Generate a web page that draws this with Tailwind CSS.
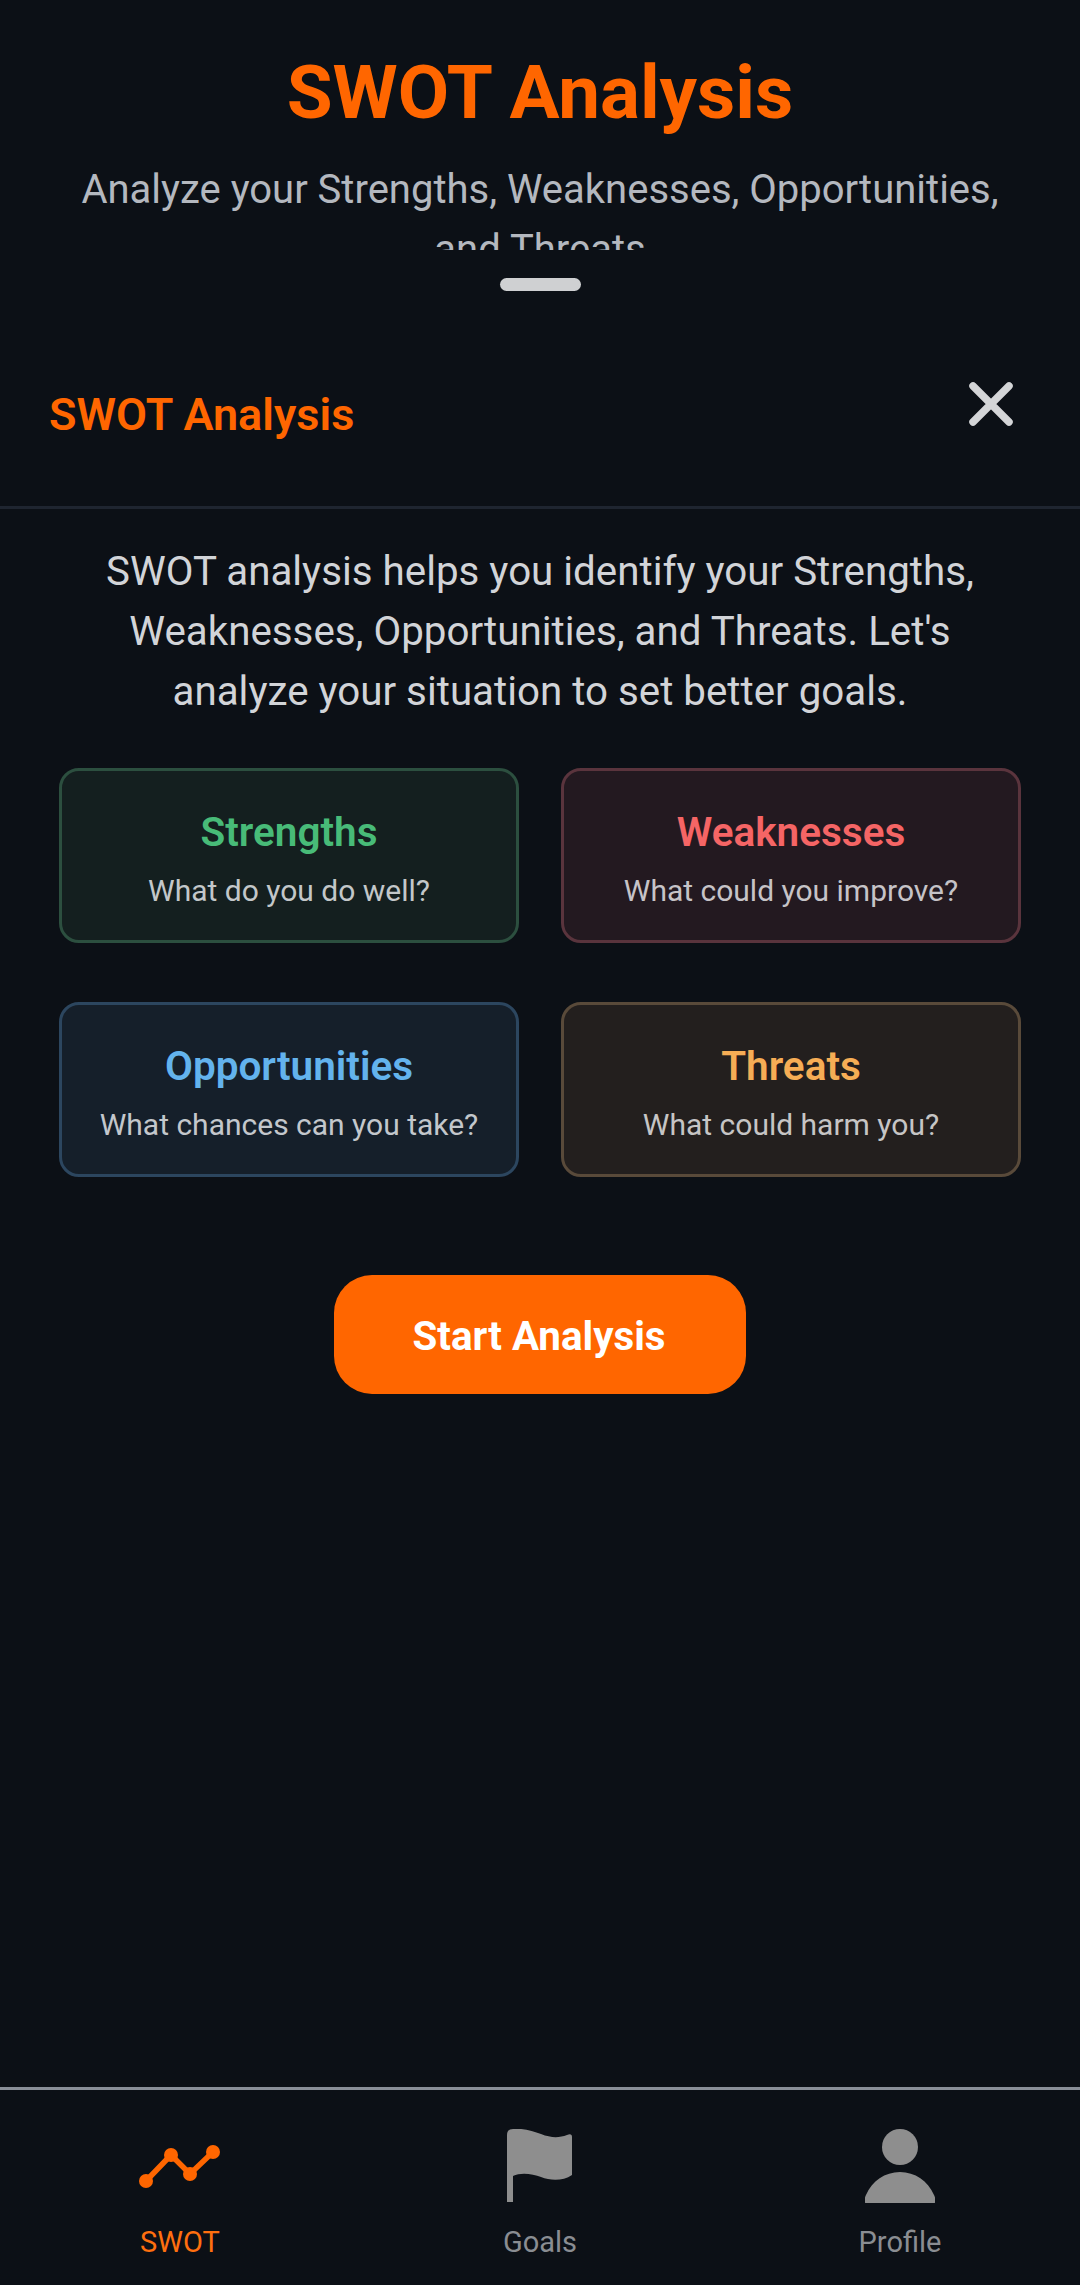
<!DOCTYPE html>
<html lang="en">
<head>
    <meta charset="UTF-8">
    <meta name="viewport" content="width=device-width, initial-scale=1.0">
    <title>SWOT Analysis</title>
    <script src="https://cdn.jsdelivr.net/npm/@tailwindcss/browser@4"></script>
</head>
<body class="bg-[#0c1016] font-[Roboto,sans-serif]">
    <div class="w-[1080px] h-[2285px] flex flex-col overflow-hidden">
        <!-- Page header, cut off by the sheet -->
        <div class="h-[250px] overflow-hidden px-[60px] pt-[48px] text-center shrink-0">
            <h1 class="text-[74.5px] leading-[90px] font-bold text-[#ff6600]">SWOT Analysis</h1>
            <p class="mt-[22px] text-[40px] leading-[60px] text-[#b4b8bf]">Analyze your Strengths, Weaknesses, Opportunities, and Threats</p>
        </div>

        <!-- Sheet -->
        <div class="flex-1 flex flex-col">
            <div class="mt-[28px] mx-auto w-[81px] h-[13px] rounded-full bg-[#cfd0d2]"></div>

            <div class="h-[218px] pl-[49px] pr-[67px] pt-[85px] flex justify-between items-start border-b-[3px] border-[#1f2530]">
                <h2 class="mt-[13px] text-[45px] leading-[52px] font-semibold text-[#ff6600]">SWOT Analysis</h2>
                <svg class="mt-[6px]" width="44" height="44" viewBox="0 0 44 44" fill="none" stroke="#d4d5d7" stroke-width="7.5" stroke-linecap="round">
                    <path d="M4 4L40 40M40 4L4 40"/>
                </svg>
            </div>

            <p class="mt-[33px] px-[80px] text-center text-[40.3px] leading-[60px] text-[#d2d4d8]">SWOT analysis helps you identify your Strengths, Weaknesses, Opportunities, and Threats. Let's analyze your situation to set better goals.</p>

            <div class="mt-[46px] mx-[59px] grid grid-cols-2 gap-x-[42px] gap-y-[59px]">
                <div class="h-[175px] pt-[6px] rounded-[20px] border-[3px] border-[#2c4f3f] bg-[#141f1f] flex flex-col items-center justify-center">
                    <h3 class="text-[40.5px] leading-[50px] font-semibold text-[#48bb78]">Strengths</h3>
                    <p class="mt-[14px] text-[30px] leading-[40px] text-[#c3c7c9]">What do you do well?</p>
                </div>
                <div class="h-[175px] pt-[6px] rounded-[20px] border-[3px] border-[#5a343d] bg-[#231920] flex flex-col items-center justify-center">
                    <h3 class="text-[40.5px] leading-[50px] font-semibold text-[#f56565]">Weaknesses</h3>
                    <p class="mt-[14px] text-[30px] leading-[40px] text-[#c6c3c7]">What could you improve?</p>
                </div>
                <div class="h-[175px] pt-[6px] rounded-[20px] border-[3px] border-[#2c465f] bg-[#151f2a] flex flex-col items-center justify-center">
                    <h3 class="text-[40.5px] leading-[50px] font-semibold text-[#63b3ed]">Opportunities</h3>
                    <p class="mt-[14px] text-[30px] leading-[40px] text-[#c3c7cc]">What chances can you take?</p>
                </div>
                <div class="h-[175px] pt-[6px] rounded-[20px] border-[3px] border-[#594a3a] bg-[#231f1e] flex flex-col items-center justify-center">
                    <h3 class="text-[40.5px] leading-[50px] font-semibold text-[#f6ad55]">Threats</h3>
                    <p class="mt-[14px] text-[30px] leading-[40px] text-[#c6c5c5]">What could harm you?</p>
                </div>
            </div>

            <button class="mt-[98px] mx-auto w-[412px] h-[119px] pt-[5px] pr-[2px] rounded-[38px] bg-[#ff6600] text-white text-[40.3px] font-bold">Start Analysis</button>
        </div>

        <!-- Bottom tabs -->
        <nav class="h-[198px] shrink-0 border-t-[3px] border-[#8a8f98] grid grid-cols-3 text-[29px] leading-[36px]">
            <div class="flex flex-col items-center">
                <svg class="mt-[39px]" width="84" height="74" viewBox="0 0 84 74" fill="none" stroke="#ff6600" stroke-width="5.5">
                    <path d="M8 52L33 26L52 45L75 23"/>
                    <g fill="#ff6600" stroke="none">
                        <circle cx="8" cy="52" r="7"/>
                        <circle cx="33" cy="26" r="7"/>
                        <circle cx="52" cy="45" r="7"/>
                        <circle cx="75" cy="23" r="7"/>
                    </g>
                </svg>
                <span class="mt-[21px] text-[#ff6f0f]">SWOT</span>
            </div>
            <div class="flex flex-col items-center">
                <svg class="mt-[39px]" width="66" height="74" viewBox="0 0 66 74" fill="#8e8e8e">
                    <path d="M0 73V6Q0 0 6 0C16 -1 26 2 34 5C44 9 52 9 60 6Q65 4 65 8V46C56 52 44 52 34 48C26 45 14 43 6 47V73Z"/>
                </svg>
                <span class="mt-[21px] text-[#8a8d92]">Goals</span>
            </div>
            <div class="flex flex-col items-center">
                <svg class="mt-[39px]" width="70" height="74" viewBox="0 0 70 74" fill="#8e8e8e">
                    <circle cx="35" cy="18" r="18"/>
                    <path d="M1 74C-2 74 0 68 1 66C7 52 20 43 35 43C50 43 63 52 69 66C70 68 72 74 69 74Z"/>
                </svg>
                <span class="mt-[21px] text-[#8a8d92]">Profile</span>
            </div>
        </nav>
    </div>
</body>
</html>
